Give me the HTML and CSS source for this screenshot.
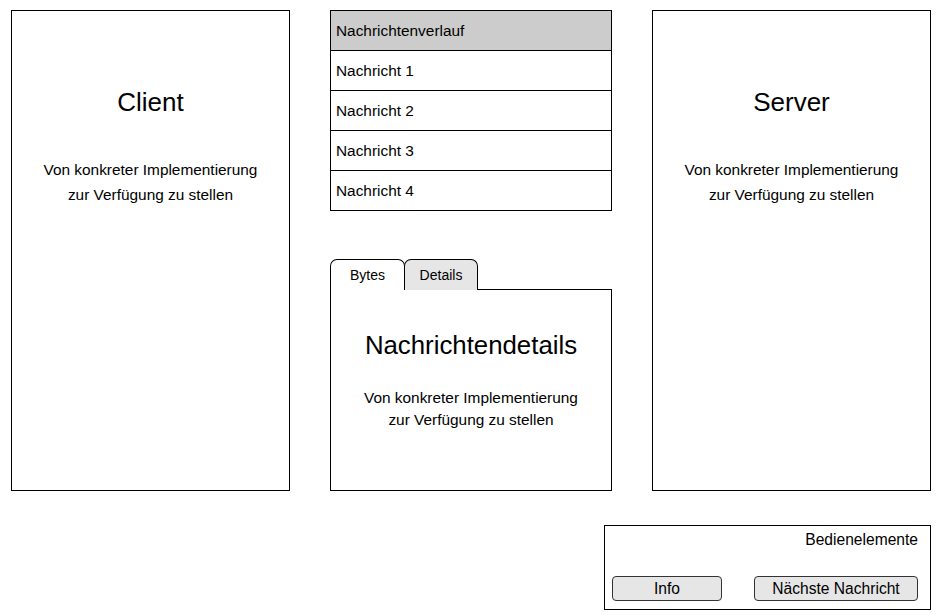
FILE: index.html
```html
<!DOCTYPE html>
<html lang="de">
<head>
<meta charset="utf-8">
<title>Nachrichten</title>
<link rel="stylesheet" href="styles.css">
</head>
<body>
<div class="page">
  <div class="top">
    <section class="panel">
      <h1 class="panel-title">Client</h1>
      <p class="panel-text">Von konkreter Implementierung<br>zur Verfügung zu stellen</p>
    </section>
    <div class="middle">
      <ul class="list">
        <li class="list-head">Nachrichtenverlauf</li>
        <li class="list-row">Nachricht 1</li>
        <li class="list-row">Nachricht 2</li>
        <li class="list-row">Nachricht 3</li>
        <li class="list-row">Nachricht 4</li>
      </ul>
      <div class="tabs">
        <div class="tab tab-active">Bytes</div>
        <div class="tab tab-inactive">Details</div>
      </div>
      <section class="details">
        <h2 class="details-title">Nachrichtendetails</h2>
        <p class="details-text">Von konkreter Implementierung<br>zur Verfügung zu stellen</p>
      </section>
    </div>
    <section class="panel">
      <h1 class="panel-title">Server</h1>
      <p class="panel-text">Von konkreter Implementierung<br>zur Verfügung zu stellen</p>
    </section>
  </div>
  <div class="bottom">
    <div class="controls">
      <div class="controls-label">Bedienelemente</div>
      <div class="buttons">
        <button class="btn btn-info">Info</button>
        <button class="btn btn-next">Nächste Nachricht</button>
      </div>
    </div>
  </div>
</div>
</body>
</html>
```
FILE: styles.css
```css
* { box-sizing: border-box; }
html, body { margin: 0; padding: 0; background: #fff; }
body {
  font-family: "Liberation Sans", Arial, sans-serif;
  color: #000;
  width: 939px;
  height: 616px;
  overflow: hidden;
}
.page { padding: 10px 0 0 11px; }
.top {
  display: flex;
  gap: 40px;
  align-items: flex-start;
}
.panel {
  width: 279px;
  height: 481px;
  border: 1px solid #000;
  text-align: center;
  padding-top: 76px;
}
.panel-title {
  margin: 0;
  font-size: 26px;
  font-weight: normal;
  line-height: 30px;
}
.panel-text {
  margin: 40px 0 0;
  font-size: 15.4px;
  line-height: 25px;
}
.middle {
  width: 282px;
  display: flex;
  flex-direction: column;
}
.list {
  list-style: none;
  margin: 0;
  padding: 0;
  border: 1px solid #000;
  border-bottom: none;
}
.list-head, .list-row {
  height: 40px;
  border-bottom: 1px solid #000;
  font-size: 15.4px;
  line-height: 40px;
  padding-left: 5px;
}
.list-head { background: #cccccc; }
.tabs {
  display: flex;
  margin-top: 48px;
  height: 31px;
  position: relative;
  z-index: 1;
  margin-bottom: -1px;
}
.tab {
  height: 31px;
  border: 1px solid #000;
  border-bottom: none;
  border-radius: 7px 7px 0 0;
  font-size: 14px;
  line-height: 31px;
  text-align: center;
}
.tab-active { width: 75px; background: #fff; }
.tab-inactive { width: 74px; background: #e6e6e6; margin-left: -1px; }
.details {
  height: 202px;
  border: 1px solid #000;
  text-align: center;
  padding-top: 40px;
  background: #fff;
}
.details-title {
  margin: 0;
  font-size: 25.8px;
  font-weight: normal;
  line-height: 30px;
}
.details-text {
  margin: 27px 0 0;
  font-size: 15.4px;
  line-height: 22px;
}
.bottom {
  display: flex;
  justify-content: flex-end;
  margin-top: 34px;
  padding-right: 8px;
}
.controls {
  width: 327px;
  height: 85px;
  border: 1px solid #000;
  padding: 5px 12px 0 7px;
  display: flex;
  flex-direction: column;
}
.controls-label {
  text-align: right;
  font-size: 15.6px;
  line-height: 18px;
}
.buttons {
  display: flex;
  justify-content: space-between;
  margin-top: 27px;
}
.btn {
  font-family: "Liberation Sans", Arial, sans-serif;
  font-size: 15.6px;
  height: 25px;
  background: #e6e6e6;
  border: 1px solid #333;
  border-radius: 4px;
  padding: 0;
  color: #000;
  line-height: 24px;
}
.btn-info { width: 110px; }
.btn-next { width: 164px; }
```
